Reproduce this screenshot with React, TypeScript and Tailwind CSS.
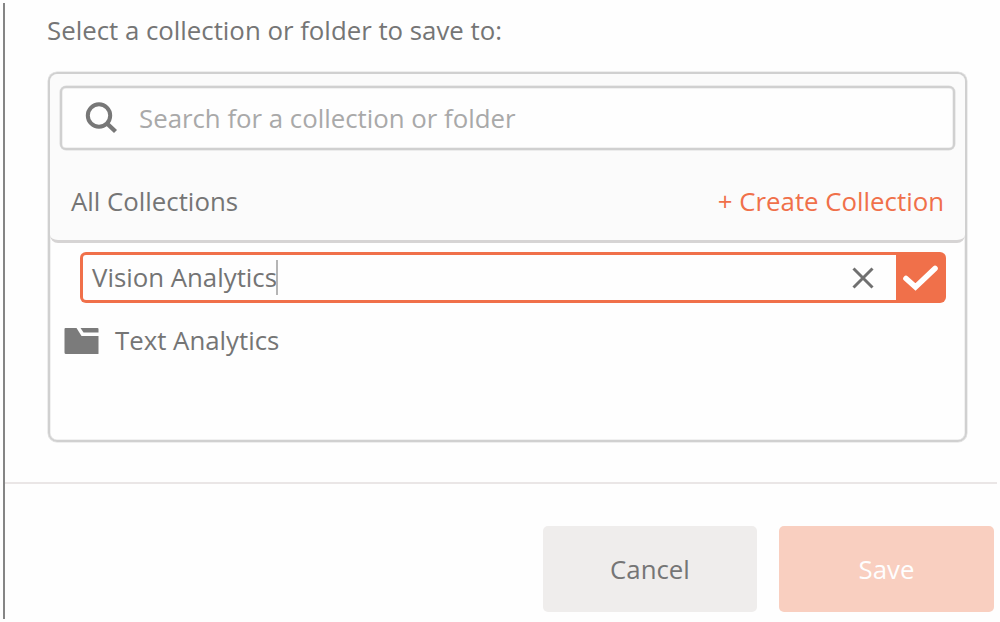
import React from "react";

function SearchIcon() {
  return (
    <svg width="34" height="34" viewBox="0 0 34 34" fill="none" stroke="#777777">
      <circle cx="15" cy="14.5" r="11.2" strokeWidth="4" />
      <path d="M23 22.5 L31.5 30.5" strokeWidth="4.4" />
    </svg>
  );
}

function FolderIcon() {
  return (
    <svg width="36" height="28" viewBox="0 0 36 28" fill="#7b7b7b">
      <path d="M1.5 1 H12.5 L17.5 9 H34.5 V26.5 Q34.5 27 34 27 H2 Q0.5 27 0.5 25.5 V2 Q0.5 1 1.5 1 Z" />
      <path d="M16.5 1 H33.5 Q34.5 1 34.5 2 V5.5 H19.5 Z" />
    </svg>
  );
}

function SearchBox() {
  return (
    <div className="flex h-[64px] items-center rounded-[6px] border-2 border-[#d0d0d0] bg-[#fefefe] pl-[22px] shadow-[0_0_0_0.5px_#dedede,inset_0_0_0_0.5px_#e4e4e4]">
      <SearchIcon />
      <span className="ml-[21px] pt-[2px] leading-none text-[#a9a9a9]">Search for a collection or folder</span>
    </div>
  );
}

function NameEditor() {
  return (
    <div className="ml-[30px] mr-[19px] mt-[9px] flex h-[51px] rounded-[6px] bg-[#f0704a] p-[3px]">
      <div className="flex flex-1 items-center rounded-l-[3px] bg-[#fefefe] pl-[9px] pr-[21px]">
        <span className="leading-none text-[#747474]">Vision Analytics</span>
        <span className="-ml-px h-[35px] w-[2px] bg-[#b5b5b5]" />
        <svg className="ml-auto" width="24" height="24" viewBox="0 0 24 24" fill="none" stroke="#707070" strokeWidth="3">
          <path d="M2.5 2.5 L21.5 21.5 M21.5 2.5 L2.5 21.5" />
        </svg>
      </div>
      <div className="flex w-[47px] items-center justify-center">
        <svg
          width="38"
          height="28"
          viewBox="0 0 38 28"
          fill="none"
          stroke="#ffffff"
          strokeWidth="5.6"
          strokeLinecap="round"
        >
          <path d="M5 14.5 L14.5 23 L34 4.5" strokeLinejoin="miter" />
        </svg>
      </div>
    </div>
  );
}

export default function App() {
  return (
    <div className="h-[622px] w-[1000px] overflow-hidden bg-[#fefefe] pb-[3px] pl-[3px] pt-[3px] font-['Open_Sans','Noto_Sans',sans-serif] text-[25.8px] leading-none text-[#757575]">
      <div className="flex h-[616px] flex-col border-l-2 border-[#858585]">
        <div className="h-[69px] pl-[42px] pt-[15px]">Select a collection or folder to save to:</div>
        <div className="ml-[43px] flex h-[370px] w-[919px] flex-col rounded-[9px] border-2 border-[#d0d0d0] shadow-[0_0_0_0.5px_#dedede,inset_0_0_0_0.5px_#e4e4e4]">
          <div className="h-[169px] rounded-[8px] border-b-[3px] border-[#d6d4d4] bg-[#fbfbfb] px-[10px] pt-[12px]">
            <SearchBox />
            <div className="flex h-[90px] items-center justify-between pl-[11px] pr-[11px] pt-[14px]">
              <span>All Collections</span>
              <span className="text-[#f0704a]">+ Create Collection</span>
            </div>
          </div>
          <NameEditor />
          <div className="mt-[24px] flex items-center pl-[14px]">
            <FolderIcon />
            <span className="ml-[15px]">Text Analytics</span>
          </div>
        </div>
        <div className="mt-[40px] h-[2px] w-[992px] bg-[#eae6e6]" />
        <div className="mt-[42px] flex gap-[22px] pl-[538px]">
          <button className="h-[86px] w-[214px] rounded-[5px] bg-[#efedec] pt-[2px]">Cancel</button>
          <button className="h-[86px] w-[215px] rounded-[5px] bg-[#f9cfc0] pt-[2px] font-medium text-[#fefefe]">
            Save
          </button>
        </div>
      </div>
    </div>
  );
}
